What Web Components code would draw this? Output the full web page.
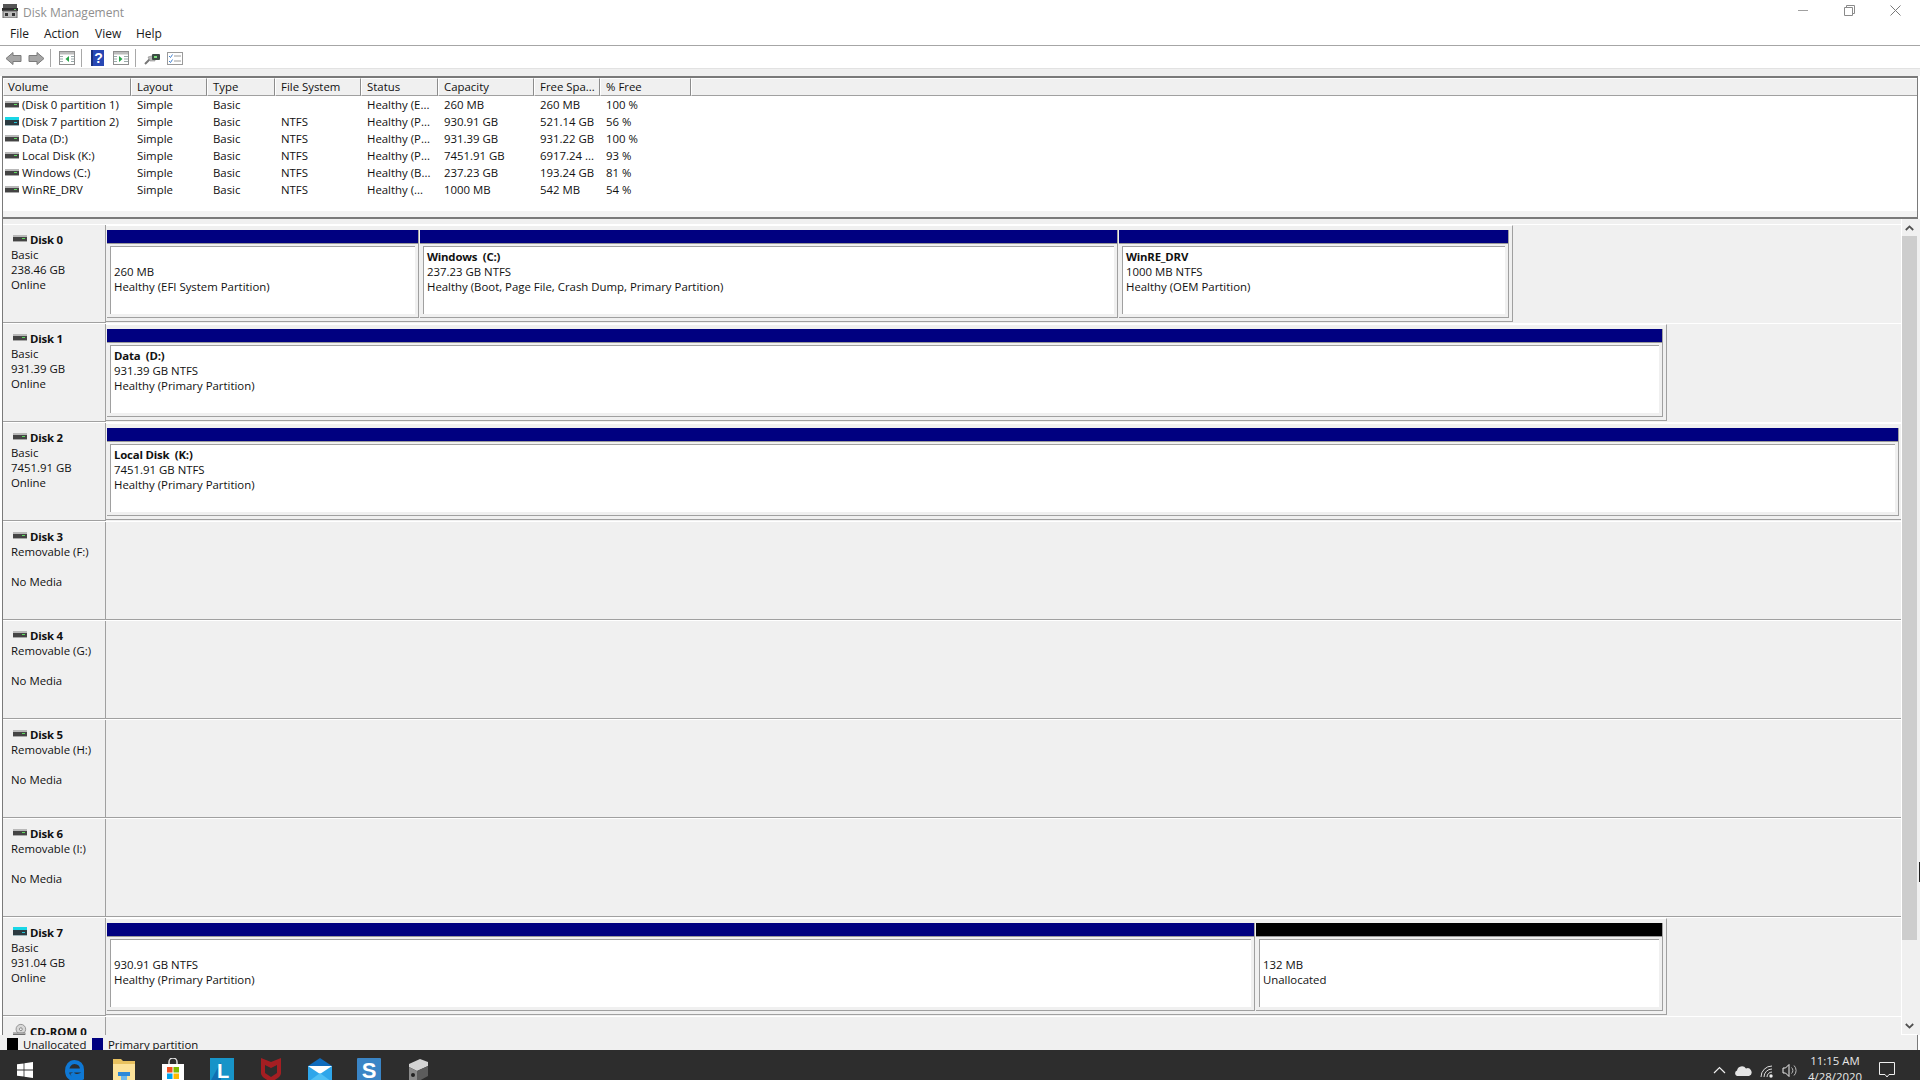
<!DOCTYPE html>
<html lang="en"><head><meta charset="utf-8"><title>Disk Management</title>
<style>
html,body{margin:0;padding:0;height:1080px;overflow:hidden;background:#fff}
body{font:11.4px/15px "Open Sans","Noto Sans",sans-serif;color:#111}
</style></head><body>
<dm-app>
  <title-bar>Disk Management</title-bar>
  <menu-bar>
    <menu-item w="34">File</menu-item><menu-item w="51">Action</menu-item><menu-item w="41">View</menu-item><menu-item w="40">Help</menu-item>
  </menu-bar>
  <tool-bar></tool-bar>
  <tool-strip></tool-strip>
  <vol-list></vol-list>
  <disk-pane>
    <disk-row>
      <disk-label slot="label" name="Disk 0">Basic<br>238.46 GB<br>Online</disk-label>
      <disk-frame>
        <disk-part w="312"><br>260 MB<br>Healthy (EFI System Partition)</disk-part>
        <disk-part w="698"><b>Windows  (C:)</b><br>237.23 GB NTFS<br>Healthy (Boot, Page File, Crash Dump, Primary Partition)</disk-part>
        <disk-part w="390"><b>WinRE_DRV</b><br>1000 MB NTFS<br>Healthy (OEM Partition)</disk-part>
      </disk-frame>
    </disk-row>
    <disk-row>
      <disk-label slot="label" name="Disk 1">Basic<br>931.39 GB<br>Online</disk-label>
      <disk-frame><disk-part w="1556"><b>Data  (D:)</b><br>931.39 GB NTFS<br>Healthy (Primary Partition)</disk-part></disk-frame>
    </disk-row>
    <disk-row>
      <disk-label slot="label" name="Disk 2">Basic<br>7451.91 GB<br>Online</disk-label>
      <disk-frame><disk-part w="1792"><b>Local Disk  (K:)</b><br>7451.91 GB NTFS<br>Healthy (Primary Partition)</disk-part></disk-frame>
    </disk-row>
    <disk-row empty><disk-label slot="label" name="Disk 3">Removable (F:)<br><br>No Media</disk-label></disk-row>
    <disk-row empty><disk-label slot="label" name="Disk 4">Removable (G:)<br><br>No Media</disk-label></disk-row>
    <disk-row empty><disk-label slot="label" name="Disk 5">Removable (H:)<br><br>No Media</disk-label></disk-row>
    <disk-row empty><disk-label slot="label" name="Disk 6">Removable (I:)<br><br>No Media</disk-label></disk-row>
    <disk-row>
      <disk-label slot="label" name="Disk 7" icon="cyan">Basic<br>931.04 GB<br>Online</disk-label>
      <disk-frame>
        <disk-part w="1148"><br>930.91 GB NTFS<br>Healthy (Primary Partition)</disk-part>
        <disk-part w="407" kind="free"><br>132 MB<br>Unallocated</disk-part>
      </disk-frame>
    </disk-row>
    <disk-row empty><disk-label slot="label" name="CD-ROM 0" icon="cd"></disk-label></disk-row>
  </disk-pane>
  <legend-bar></legend-bar>
  <task-bar></task-bar>
</dm-app>
<script>
const hdd=(c)=>c==='cyan'
 ?`<svg width="14" height="9" viewBox="0 0 14 9"><rect y="0" width="14" height="4" fill="#19d6e6"/><rect y="3" width="14" height="5" fill="#2c3a40"/><rect x="9" y="5" width="3" height="1" fill="#22c7d8"/><rect y="8" width="14" height="1" fill="#9db4b8"/></svg>`
 :`<svg width="14" height="9" viewBox="0 0 14 9"><rect y="1" width="14" height="2" fill="#b8b8b8"/><rect y="3" width="14" height="4" fill="#444"/><rect x="9" y="4" width="3" height="1" fill="#5fdc5f"/><rect y="7" width="14" height="1" fill="#a8a8a8"/></svg>`;
const cd=`<svg width="16" height="15" viewBox="0 0 16 15"><circle cx="9" cy="6" r="5.5" fill="#d8d8d8" stroke="#8c8c8c"/><circle cx="9" cy="6" r="1.6" fill="#fff" stroke="#777"/><rect x="0" y="10" width="14" height="5" fill="#454545"/><rect x="0" y="10" width="14" height="2" fill="#a9a9a9"/><rect x="9" y="13" width="3" height="1" fill="#5fdc5f"/></svg>`;
function def(name,css,html,init){
  customElements.define(name,class extends HTMLElement{
    constructor(){super();this.attachShadow({mode:'open'}).innerHTML=`<style>${css}</style>${html}`;}
    connectedCallback(){init&&init.call(this,this.shadowRoot);}
  });
}
def('dm-app',`:host{display:flex;flex-direction:column;width:1920px;height:1080px;overflow:hidden;background:#fff;position:relative}
 .cursor{position:absolute;left:1919px;top:862px;width:1px;height:20px;background:#222}`,`<slot></slot><div class="cursor"></div>`);
def('title-bar',`:host{display:flex;flex:0 0 22px;height:22px;align-items:center;background:#fff;color:#8f8f8f;font-size:12px}
 .ic{margin:0 5px 0 2px;display:flex}
 .txt{flex:1;padding-top:2px}
 .b{width:46px;height:22px;display:flex;align-items:flex-start;justify-content:center;padding-top:5px;box-sizing:border-box}
 .bs{display:flex;margin-right:2px}`,
 `<span class="ic"><svg width="16" height="14" viewBox="0 0 16 14"><rect x="1" y="0" width="14" height="4" fill="#555"/><rect x="0" y="4" width="16" height="3" fill="#2e2e2e"/><rect x="12" y="5" width="2" height="1" fill="#6c6"/><rect x="1" y="7" width="14" height="7" fill="#bdbdbd" stroke="#666" stroke-width="1"/><rect x="3" y="9" width="3" height="3" fill="#333"/><rect x="10" y="9" width="3" height="3" fill="#333"/></svg></span>
 <span class="txt"><slot></slot></span>
 <span class="bs">
  <span class="b"><svg width="11" height="11" viewBox="0 0 11 11"><path d="M0 5.5H10" stroke="#a0a0a0" fill="none"/></svg></span>
  <span class="b"><svg width="11" height="11" viewBox="0 0 11 11"><path d="M.5 2.5h8v8h-8zM2.5 2.5v-2h8v8h-2" stroke="#8a8a8a" fill="none"/></svg></span>
  <span class="b"><svg width="11" height="11" viewBox="0 0 11 11"><path d="M.5.5l10 10M10.5.5l-10 10" stroke="#7a7a7a" fill="none"/></svg></span>
 </span>`);
def('menu-bar',`:host{display:flex;flex:0 0 24px;box-sizing:border-box;height:24px;padding:0 0 0 10px;border-bottom:1px solid #a6a6a6;align-items:center;font-size:12px;color:#1a1a1a;background:#fff}`,`<slot></slot>`);
def('menu-item',`:host{display:block}`,`<slot></slot>`,function(){this.style.width=this.getAttribute('w')+'px'});
def('tool-bar',`:host{display:flex;flex:0 0 23px;box-sizing:border-box;height:23px;align-items:center;background:#fff;border-bottom:1px solid #e2e2e2;padding:2px 0 0 5px}
 svg{display:block;flex:none}.sep{width:1px;height:18px;background:#a8a8a8;flex:none}`,
 `<svg width="17" height="15" viewBox="0 0 17 15"><path d="M1 7.5L8 1.5V4.5H16V10.5H8V13.5Z" fill="#a6a6a6" stroke="#7b7b7b"/></svg>
 <svg style="margin-left:6px" width="17" height="15" viewBox="0 0 17 15"><path d="M16 7.5L9 1.5V4.5H1V10.5H9V13.5Z" fill="#a6a6a6" stroke="#7b7b7b"/></svg>
 <span class="sep" style="margin-left:5px"></span>
 <svg style="margin-left:8px" width="16" height="14" viewBox="0 0 16 14"><rect x=".5" y=".5" width="15" height="13" fill="#fff" stroke="#8f8f8f"/><rect x="1" y="1" width="14" height="2.5" fill="#bcbcbc"/><path d="M1 5.5H4M1 8H4M1 10.5H4M12 5.5H15M12 8H15M12 10.5H15" stroke="#9aa"/><path d="M10 5L6.5 8L10 11Z" fill="#2aa64a"/></svg>
 <span class="sep" style="margin-left:6px"></span>
 <svg style="margin-left:9px" width="13" height="16" viewBox="0 0 13 16"><rect width="13" height="16" fill="#2747b4"/><rect x="0" y="0" width="2" height="16" fill="#19307f"/><text x="7.5" y="13" text-anchor="middle" font-family="Liberation Sans" font-weight="bold" font-size="14" fill="#fff">?</text></svg>
 <svg style="margin-left:9px" width="16" height="14" viewBox="0 0 16 14"><rect x=".5" y=".5" width="15" height="13" fill="#fff" stroke="#8f8f8f"/><rect x="1" y="1" width="14" height="2.5" fill="#bcbcbc"/><path d="M1 5.5H4M1 8H4M1 10.5H4M11 5.5H15M11 8H15M11 10.5H15" stroke="#9aa"/><path d="M6 5L9.5 8L6 11Z" fill="#2aa64a"/></svg>
 <span class="sep" style="margin-left:6px"></span>
 <svg style="margin-left:8px" width="16" height="14" viewBox="0 0 16 14"><path d="M1 13L6 8" stroke="#777" stroke-width="2"/><path d="M4 6L11 4V10L6 10Z" fill="#bbb" stroke="#888" stroke-width=".6"/><rect x="8" y="3" width="8" height="6" rx="1" fill="#3c4c44"/><rect x="10" y="5" width="3" height="2" fill="#7fe07f"/></svg>
 <svg style="margin-left:7px" width="16" height="13" viewBox="0 0 16 13"><rect x=".5" y=".5" width="15" height="12" fill="#fff" stroke="#9a9a9a"/><path d="M2 4L3.5 5.5L5.5 2.5M2 9L3.5 10.5L5.5 7.5" stroke="#3f7fd0" fill="none"/><path d="M7 4H14M7 9H14" stroke="#9a9a9a"/></svg>`);
def('tool-strip',`:host{display:block;flex:0 0 7px;height:7px;background:#f0f0f0}`,``);
const cols='128px 76px 68px 86px 77px 96px 66px 91px 1fr';
const vols=[
 ['(Disk 0 partition 1)','Simple','Basic','','Healthy (E...','260 MB','260 MB','100 %',0],
 ['(Disk 7 partition 2)','Simple','Basic','NTFS','Healthy (P...','930.91 GB','521.14 GB','56 %',1],
 ['Data (D:)','Simple','Basic','NTFS','Healthy (P...','931.39 GB','931.22 GB','100 %',0],
 ['Local Disk (K:)','Simple','Basic','NTFS','Healthy (P...','7451.91 GB','6917.24 ...','93 %',0],
 ['Windows (C:)','Simple','Basic','NTFS','Healthy (B...','237.23 GB','193.24 GB','81 %',0],
 ['WinRE_DRV','Simple','Basic','NTFS','Healthy (...','1000 MB','542 MB','54 %',0]];
const heads=['Volume','Layout','Type','File System','Status','Capacity','Free Spa...','% Free'];
def('vol-list',`:host{display:flex;flex-direction:column;flex:0 0 143px;height:143px;box-sizing:border-box;margin:0 2px;background:#fff;border:solid #7a7a7a;border-width:2px 1px 2px 1px}
 .hd,.row{display:grid;grid-template-columns:${cols}}
 .hd{height:18px;flex:none;background:#f0f0f0}
 .hd span{box-sizing:border-box;padding:0 0 0 5px;line-height:16px;border-top:1px solid #fff;border-left:1px solid #fff;border-right:1px solid #8c8c8c;border-bottom:1px solid #a0a0a0;white-space:nowrap;overflow:hidden}
 .hd span.f{border-right:0}
 .hd span:first-child{padding-left:4px}
 .rows{flex:1}
 .row{height:17px;line-height:17px;white-space:nowrap}
 .row span{padding-left:6px;overflow:hidden}
 .row span.v{padding-left:2px;display:flex;align-items:center}
 .v svg{flex:none;margin-right:3px}
 .band{height:6px;flex:none;background:#f3f3f3}`,
 `<div class="hd">${heads.map(h=>`<span>${h}</span>`).join('')}<span class="f"></span></div>
 <div class="rows">${vols.map(r=>`<div class="row"><span class="v">${hdd(r[8]?'cyan':'')}${r[0]}</span>${r.slice(1,8).map(c=>`<span>${c}</span>`).join('')}</div>`).join('')}</div>
 <div class="band"></div>`);
def('disk-pane',`:host{display:flex;flex:0 0 816px;height:816px;overflow:hidden;margin-left:2px;border-left:1px solid #7a7a7a;background:#f0f0f0}
 .c{width:1898px;flex:none;padding-top:5px;box-sizing:border-box;overflow:hidden}
 .sb{width:16px;flex:none;box-sizing:border-box;border-left:1px solid #fff;display:flex;flex-direction:column;align-items:stretch;border-bottom:1px solid #fff}
 .a{height:17px;display:flex;align-items:center;justify-content:center;flex:none}
 .t{height:704px;background:#cdcdcd;flex:none}.g{flex:1}`,
 `<div class="c"><slot></slot></div><div class="sb"><div class="a"><svg width="9" height="6" viewBox="0 0 9 6"><path d="M.8 5L4.5 1.4L8.2 5" fill="none" stroke="#505050" stroke-width="1.8"/></svg></div><div class="t"></div><div class="g"></div><div class="a"><svg width="9" height="6" viewBox="0 0 9 6"><path d="M.8 1L4.5 4.6L8.2 1" fill="none" stroke="#505050" stroke-width="1.8"/></svg></div></div>`);
def('disk-row',`:host{display:flex;height:99px;box-sizing:border-box;border-top:1px solid #fff;width:100%}
 .r{flex:1;display:block;min-width:0}
 :host([empty]) .r{border-bottom:1px solid #a0a0a0}`,
 `<slot name="label"></slot><div class="r"><slot></slot></div>`);
def('disk-label',`:host{display:block;flex:0 0 103px;width:103px;box-sizing:border-box;height:98px;padding:7px 0 0 8px;border-right:1px solid #a0a0a0;border-bottom:1px solid #a0a0a0;background:#f0f0f0}
 .h{display:flex;align-items:center;height:15px;font-weight:700;white-space:nowrap;letter-spacing:-.2px}
 :host([icon=cd]) .h{letter-spacing:.1px}
 .i{flex:none;margin:-2px 3px 0 2px;display:flex;width:14px}`,
 `<div class="h"><span class="i"></span><span class="n"></span></div><slot></slot>`,
 function(s){s.querySelector('.n').textContent=this.getAttribute('name');const t=this.getAttribute('icon');const i=s.querySelector('.i');i.innerHTML=t==='cd'?cd:hdd(t);if(t==='cd'){i.style.marginTop='-2px'}});
def('disk-frame',`:host{display:inline-flex;vertical-align:top;height:97px;box-sizing:border-box;padding:4px 3px 3px 1px;gap:1px;border-top:1px solid #fff;border-right:1px solid #a0a0a0;border-bottom:1px solid #a0a0a0}`,`<slot></slot>`);
def('disk-part',`:host{display:flex;flex-direction:column;height:88px;box-sizing:border-box;border-right:1px solid #a0a0a0;border-bottom:1px solid #a0a0a0;white-space:pre}
 .bar{height:13px;flex:none;background:#000080;margin-bottom:3px;box-shadow:0 1px 0 #9a9a9a}
 :host([kind=free]) .bar{background:#000}
 .box{margin:0 3px;height:68px;box-sizing:border-box;background:#fff;border-left:1px solid #a0a0a0;border-top:1px solid #a0a0a0;padding:2px 0 0 3px;overflow:hidden}
 ::slotted(b){letter-spacing:-.2px}`,
 `<div class="bar"></div><div class="box"><slot></slot></div>`,
 function(){const w=this.getAttribute('w');this.style.width=w+'px';this.style.flex='0 0 '+w+'px'});
def('legend-bar',`:host{display:flex;flex:0 0 15px;height:15px;box-sizing:border-box;margin-right:2px;border-right:1px solid #7a7a7a;background:#f0f0f0;overflow:hidden;white-space:nowrap;padding-left:7px}
 i{width:11px;height:13px;margin-top:3px;flex:none;display:block}
 span{line-height:19px;height:15px}`,
 `<i style="background:#000"></i><span style="margin-left:5px;width:69px">Unallocated</span><i style="background:#000080"></i><span style="margin-left:5px">Primary partition</span>`);
def('task-bar',`:host{display:flex;flex:0 0 30px;height:30px;overflow:hidden;background:#2d2d2d;color:#e8e8e8;position:relative}
 .c{flex:none;width:49px;height:40px;display:flex;align-items:flex-start;justify-content:center;padding-top:8px;box-sizing:border-box}
 .c svg{display:block}
 .sp{flex:1}
 .tr{flex:none;height:30px;display:flex;justify-content:center;padding-top:11px;box-sizing:border-box}
 .clk{width:68px;text-align:center;font-size:11.4px;line-height:16px;height:40px;padding-top:3px;box-sizing:border-box;white-space:nowrap}`,
 `<div class="c" style="width:50px;padding-top:12px"><svg width="16" height="16" viewBox="0 0 16 16" fill="#fff"><path d="M0 2.3L6.6 1.4V7.5H0ZM7.4 1.3L16 0V7.5H7.4ZM0 8.5H6.6V14.6L0 13.7ZM7.4 8.5H16V16L7.4 14.7Z"/></svg></div>
 <div class="c"><svg width="24" height="24" viewBox="0 0 24 24"><path d="M5 12.5H19C19.3 7 16 4 11.5 4C7 4 4 8 4 13C4 19 9 22 14 21.5C16.5 21.3 18 20.5 19 20V16.5C16 18.5 10.5 18.8 9 15" fill="none" stroke="#0f78d4" stroke-width="4"/></svg></div>
 <div class="c"><svg width="24" height="24" viewBox="0 0 24 24"><path d="M1 1H9L11 3H23V22H1Z" fill="#e8c15f"/><path d="M1 6H23V22H1Z" fill="#fce29a"/><rect x="6" y="14" width="12" height="4" fill="#2b88d8"/><rect x="9" y="18" width="6" height="6" fill="#6cb8ec"/></svg></div>
 <div class="c"><svg width="24" height="24" viewBox="0 0 24 24"><path d="M8 6V4A4 4 0 0 1 16 4V6" fill="none" stroke="#ddd" stroke-width="1.5"/><rect x="1" y="6" width="22" height="19" fill="#fff"/><rect x="6" y="9" width="5.5" height="5.5" fill="#f25022"/><rect x="12.5" y="9" width="5.5" height="5.5" fill="#7fba00"/><rect x="6" y="15.5" width="5.5" height="5.5" fill="#00a4ef"/><rect x="12.5" y="15.5" width="5.5" height="5.5" fill="#ffb900"/></svg></div>
 <div class="c"><svg width="24" height="24" viewBox="0 0 24 24"><rect width="24" height="24" fill="#1794c8"/><path d="M0 24L11 4V24Z" fill="#0f5fa8" opacity=".7"/><text x="13" y="20" text-anchor="middle" font-family="Liberation Sans" font-weight="bold" font-size="20" fill="#fff">L</text></svg></div>
 <div class="c"><svg width="24" height="24" viewBox="0 0 24 24"><path d="M2 0L12 4L22 0V15C22 19 16 22 12 24C8 22 2 19 2 15Z" fill="#a41e22"/><path d="M6 7L12 10L18 7V15L12 19L6 15Z" fill="#2d2d2d"/></svg></div>
 <div class="c"><svg width="24" height="24" viewBox="0 0 24 24"><path d="M12 0L24 8H0Z" fill="#0f6cbd"/><rect y="8" width="24" height="16" fill="#2ea6ea"/><path d="M0 8L12 16L24 8Z" fill="#fff"/><path d="M0 24L12 15L24 24Z" fill="#4fc0f5"/></svg></div>
 <div class="c"><svg width="24" height="24" viewBox="0 0 24 24"><rect width="24" height="24" rx="1" fill="#3a85c6"/><text x="12" y="20" text-anchor="middle" font-family="Liberation Sans" font-weight="bold" font-size="22" fill="#fff">S</text></svg></div>
 <div class="c"><svg width="24" height="24" viewBox="0 0 24 24"><path d="M3 6L14 1L22 4V8L11 13L3 9Z" fill="#d4d4d4"/><path d="M3 9L11 13V24H3Z" fill="#8a8a8a"/><path d="M11 13L22 8V18L11 24Z" fill="#5c5c5c"/><circle cx="7" cy="17" r="2" fill="#222"/></svg></div>
 <span class="sp"></span>
 <div class="tr" style="width:24px;padding-top:16px"><svg width="13" height="8" viewBox="0 0 13 8"><path d="M1 7L6.5 1.5L12 7" fill="none" stroke="#eee" stroke-width="1.2"/></svg></div>
 <div class="tr" style="width:24px;padding-top:15px"><svg width="18" height="11" viewBox="0 0 18 11"><path d="M3 11A3 3 0 0 1 3 5.4A5 5 0 0 1 12 3.5A4 4 0 0 1 15 11Z" fill="#e4e4e4"/></svg></div>
 <div class="tr" style="width:24px;padding-top:15px"><svg width="14" height="13" viewBox="0 0 14 13"><path d="M1 12A11 11 0 0 1 12 1M4 12A8 8 0 0 1 12 4M7 12A5 5 0 0 1 12 7" fill="none" stroke="#ddd"/><circle cx="11" cy="11" r="1.7" fill="#eee"/></svg></div>
 <div class="tr" style="width:22px;padding-top:13px"><svg width="16" height="15" viewBox="0 0 16 15"><path d="M1 5H3.5L7 1.5V13.5L3.5 10H1Z" fill="none" stroke="#eee"/><path d="M9.5 4.5A4 4 0 0 1 9.5 10.5M12 2.5A7 7 0 0 1 12 12.5" fill="none" stroke="#bbb"/></svg></div>
 <div class="clk">11:15 AM<br>4/28/2020</div>
 <div class="tr" style="width:36px;padding-top:12px"><svg width="16" height="17" viewBox="0 0 16 17"><path d="M.5.5H15.5V12.5H10L8 15L6 12.5H.5Z" fill="none" stroke="#eee"/></svg></div>
 <div style="width:15px;flex:none"></div>`);
</script>
</body></html>
